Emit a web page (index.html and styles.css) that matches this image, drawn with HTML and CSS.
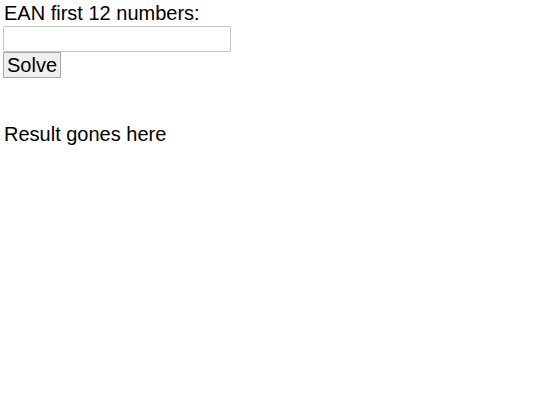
FILE: index.html
```html
<!DOCTYPE html>
<html lang="en">
<head>
    <meta charset="UTF-8">
    <title>EAN Solver</title>
    <link rel="stylesheet" href="styles.css">
</head>
<body>
    <div class="solver">
        <label for="ean" class="ean-label">EAN first 12 numbers:</label>
        <input type="text" id="ean" name="ean" maxlength="12">
        <button type="button" class="solve-btn" id="solveButton">Solve</button>
        <p class="result" id="result">Result gones here</p>
    </div>

    <script>
        // Work out the 13th (check) digit of the EAN
        document.getElementById("solveButton").onclick = function() {
            const value = document.getElementById("ean").value.trim();
            const result = document.getElementById("result");
            if (!/^\d{12}$/.test(value)) {
                result.textContent = "Please enter 12 numbers";
                return;
            }
            let sum = 0;
            for (let i = 0; i < 12; i++) {
                sum += Number(value[i]) * (i % 2 === 0 ? 1 : 3);
            }
            const check = (10 - (sum % 10)) % 10;
            result.textContent = value + check;
        };
    </script>
</body>
</html>
```

FILE: styles.css
```css
body {
    margin: 2px 3px;
    font-family: "Liberation Sans", Arial, sans-serif;
    font-size: 20px;
    color: #000;
    background: #fff;
}
.ean-label {
    display: block;
    line-height: 23px;
    margin-left: 1px;
    margin-bottom: 1px;
}
#ean {
    display: block;
    box-sizing: border-box;
    width: 228px;
    height: 26px;
    margin: 0;
    padding: 0 4px;
    border: 1px solid #c6c6c6;
    border-radius: 2px;
    font-family: inherit;
    font-size: 20px;
}
.solve-btn {
    display: block;
    box-sizing: border-box;
    height: 26px;
    margin: 0;
    padding: 0 3px;
    background-color: #efefef;
    border: 1px solid #a9a9a9;
    border-radius: 0;
    font-family: inherit;
    font-size: 20px;
    line-height: 22px;
    color: #000;
}
.result {
    margin: 45px 0 0 1px;
    line-height: 23px;
}
```
